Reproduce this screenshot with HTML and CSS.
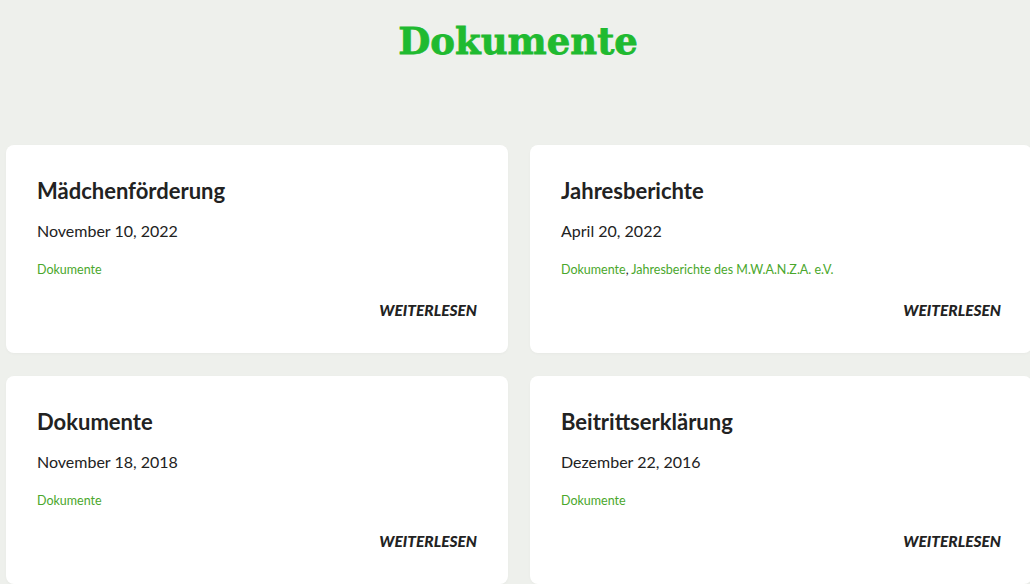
FILE: index.html
```html
<!DOCTYPE html>
<html lang="de">
<head>
<meta charset="UTF-8">
<meta name="viewport" content="width=device-width, initial-scale=1.0">
<title>Dokumente</title>
<link rel="stylesheet" href="styles.css">
</head>
<body>

<h1 class="page-title">Dokumente</h1>

<div class="posts">
  <div class="post">
    <h2>Mädchenförderung</h2>
    <div class="date">November 10, 2022</div>
    <div class="cats"><a href="#">Dokumente</a></div>
    <a class="more" href="#">WEITERLESEN</a>
  </div>

  <div class="post">
    <h2>Jahresberichte</h2>
    <div class="date">April 20, 2022</div>
    <div class="cats"><a href="#">Dokumente</a>, <a href="#">Jahresberichte des M.W.A.N.Z.A. e.V.</a></div>
    <a class="more" href="#">WEITERLESEN</a>
  </div>

  <div class="post">
    <h2>Dokumente</h2>
    <div class="date">November 18, 2018</div>
    <div class="cats"><a href="#">Dokumente</a></div>
    <a class="more" href="#">WEITERLESEN</a>
  </div>

  <div class="post">
    <h2>Beitrittserklärung</h2>
    <div class="date">Dezember 22, 2016</div>
    <div class="cats"><a href="#">Dokumente</a></div>
    <a class="more" href="#">WEITERLESEN</a>
  </div>
</div>

</body>
</html>
```

FILE: styles.css
```css
body {
  margin: 0;
  font-family: 'Lato', 'Open Sans', sans-serif;
  background: #eef0ec;
  color: #222;
  overflow: hidden;
}

/* TITLE */
.page-title {
  margin: 0;
  padding: 19px 0 0 6px;
  height: 145px;
  box-sizing: border-box;
  text-align: center;
  font-family: 'DejaVu Serif', serif;
  font-size: 37px;
  font-weight: bold;
  color: #1fba30;
  -webkit-text-stroke: 0.8px #1fba30;
}

/* POSTS */
.posts {
  display: grid;
  grid-template-columns: 502px 502px;
  gap: 23px 22px;
  padding-left: 6px;
}

.post {
  background: #fff;
  border-radius: 8px;
  height: 208px;
  box-sizing: border-box;
  padding: 32px 31px 0 31px;
  display: flex;
  flex-direction: column;
  box-shadow: 0 1px 3px rgba(0,0,0,0.03);
}

.post h2 {
  margin: 0;
  font-size: 22px;
  font-weight: bold;
  color: #222;
  line-height: 28px;
}

.date {
  margin-top: 16px;
  font-size: 16px;
  line-height: 20px;
  color: #222;
}

.cats {
  margin-top: 20px;
  font-size: 12.5px;
  line-height: 18px;
  color: #222;
}

.cats a {
  color: #4aa72c;
  text-decoration: none;
}

.more {
  align-self: flex-end;
  margin-top: 22px;
  font-size: 15.5px;
  font-weight: 900;
  font-style: italic;
  color: #222;
  text-decoration: none;
}
```
